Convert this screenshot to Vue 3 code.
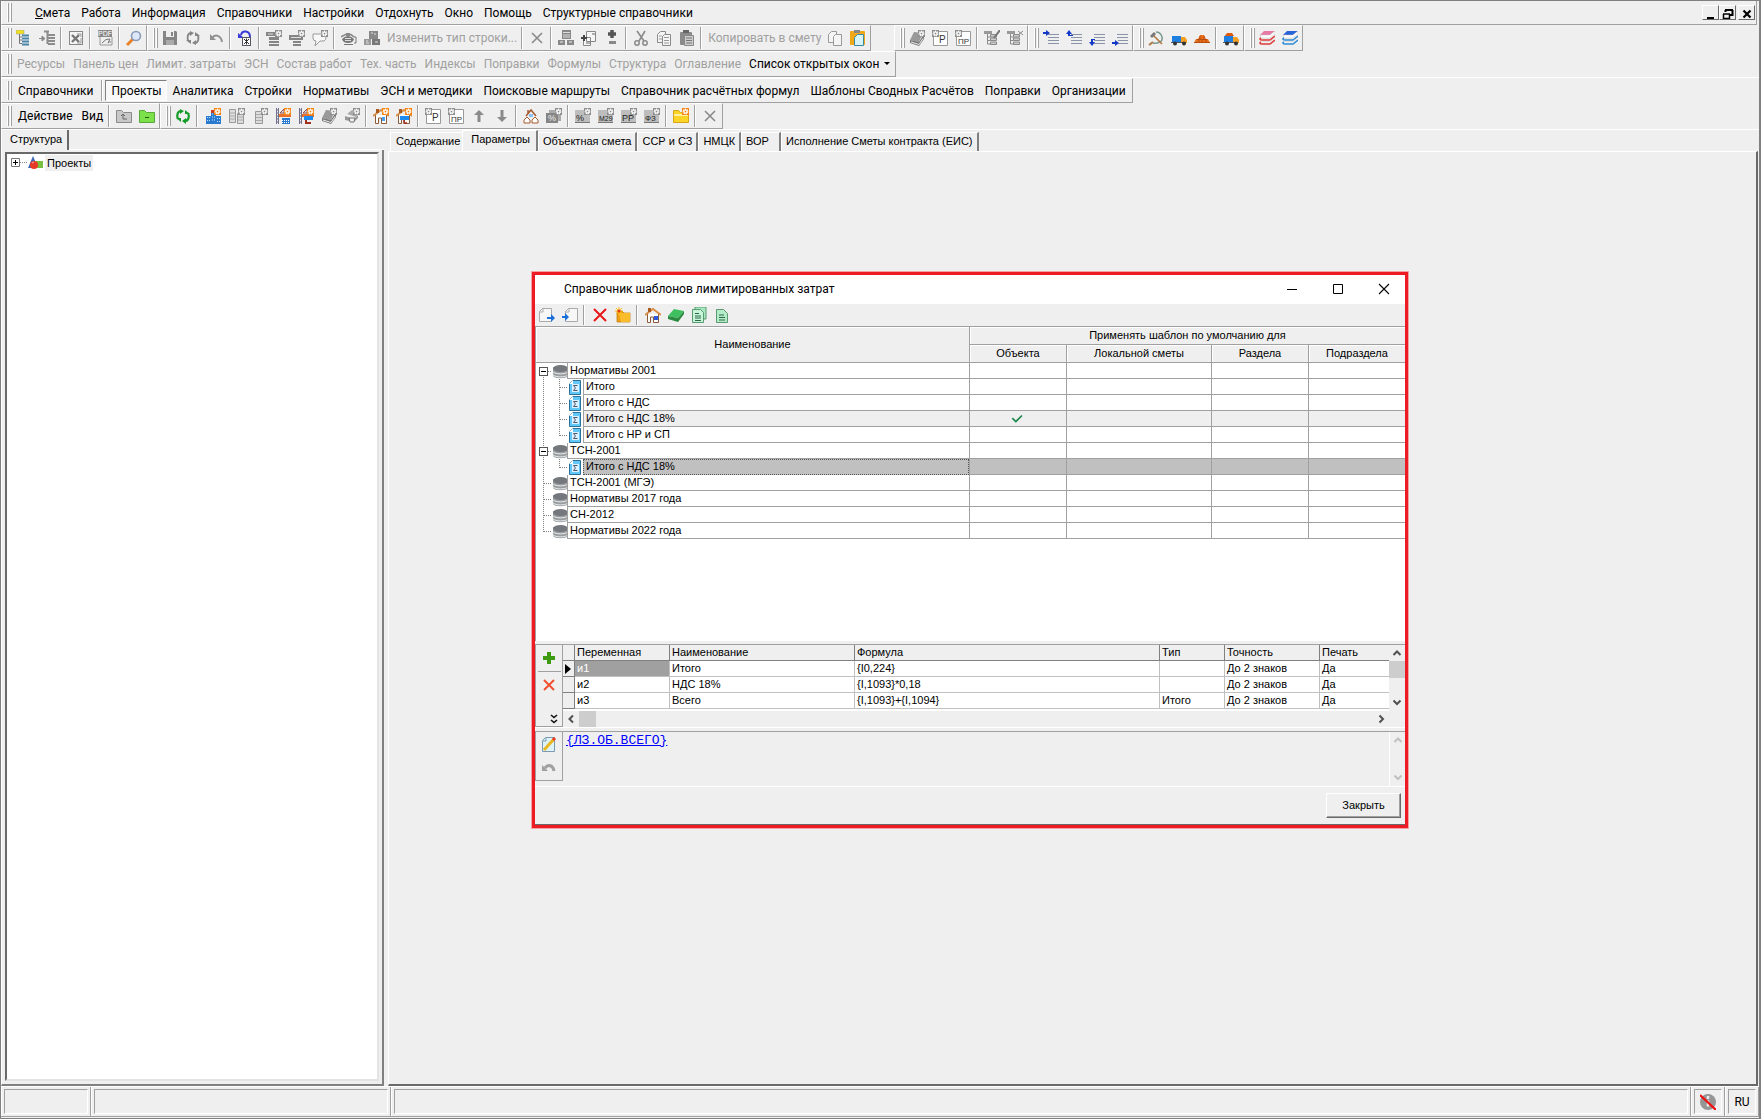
<script setup>
const gear = (x, y, c) =>
  `<rect x="${x}" y="${y}" width="7" height="7" fill="${c}"/><circle cx="${x + 3.5}" cy="${y + 3.5}" r="2" fill="none" stroke="#fff" stroke-width="1.8" stroke-dasharray="1.1 .5"/><circle cx="${x + 3.5}" cy="${y + 3.5}" r="1.4" fill="none" stroke="#fff"/>`
const G = '#8c8c8c'
const O = '#f58410'
const label = (s, x, y, size, c = '#333') =>
  `<text x="${x}" y="${y}" font-size="${size}" font-family="Liberation Sans, sans-serif" fill="${c}">${s}</text>`
const book = (c, d) =>
  `<path d="M1 10L5 2l9 1-4 9z" fill="${c}"/><path d="M1 10v3l9 3 5-7V4l-5 8z" fill="${d}"/><path d="M2 12l8 2.500 4-6" stroke="#eee" fill="none"/>`
const tree = (c, top) =>
  `<rect x="0" y="1" width="8" height="3" fill="${top}"/><path d="M3.500 4v10H7M3.500 7H7M3.500 10.500H7" stroke="${c}" fill="none"/><path d="M6.500 4.500h6v2.500h-6zM6.500 8h6v2.500h-6zM6.500 12h6v2.500h-6z" fill="#ccc" stroke="${c}"/>`
const page = (x) => `<path d="M${x}.500 4.500l3-3h9v13h-12z" fill="#f7f7f7" stroke="#aaa"/><path d="M${x} 5h4V1" fill="none" stroke="#aaa"/>`
const house = '<path d="M2.500 7v8.500h3V10h3v5.500h5V7" fill="#fff" stroke="#8a5a3a"/><path d="M0 8l8-6 8 6" fill="none" stroke="#d89048" stroke-width="2"/><rect x="3" y="1" width="3" height="4" fill="#a85a20"/>'
const plate = (s, size = 9) => `<rect x="0" y="2" width="15" height="13" fill="#bdbdbd"/><path d="M0 14.500h15" stroke="#777"/>${gear(9, 0, G)}${label(s, 1, 13, size, '#222')}`
const lines = '<path d="M5 4.500h11M5 7.500h11M5 10.500h11M5 13.500h11" stroke="#8b93a8"/>'
const truck = '<path d="M1 6h9v6H1z" fill="#1f7fe0"/><path d="M10 7h4l2 3v3h-6z" fill="#f5a020"/><path d="M0 12h15v1H0z" fill="#555"/><circle cx="4" cy="13.500" r="2" fill="#333"/><circle cx="13" cy="13.500" r="2" fill="#333"/>'
const crane = (extra) =>
  `<path d="M1.500 0v16M3.500 0v16M1 2h3M1 5h3M1 8h3M1 11h3M1 14h3" stroke="#70708c" fill="none"/><path d="M5 5l4-4v4z" fill="none" stroke="#8e4a4a"/><path d="M4 6h12v3H4z" fill="#e8702a"/>${extra}`
const sheets = (c) => `<path d="M1.500 4.500l3-3h5v11h-8z" fill="#f4f4f4" stroke="${c}"/><path d="M6.500 6.500l2-2h6v11h-8z" fill="#f4f4f4" stroke="${c}"/>`
const books = (a, b) =>
  `<path d="M5 1h11l-5 4H1z" fill="${a}"/><path d="M1 5h10l5-4v3l-5 4H2z" fill="#fff" stroke="#bbb" stroke-width=".5"/><path d="M2 8c-2 1-1 2 1 2h8l5-4M2 12c-2 1-1 2 1 2h8l5-4" fill="none" stroke="${b}" stroke-width="1.400"/><path d="M3 11.500h8l4-3" stroke="#ddd" fill="none"/>`

const icons = {
  treeY: `<rect x="0" y="0" width="8" height="4" fill="#f0e020" stroke="#999" stroke-width=".5"/><path d="M3.500 4v9.500H6M3.500 7H6M3.500 10H6" stroke="#777" fill="none"/><path d="M6 5.500h7M6 8.500h7M6 11.500h7M6 14.500h7" stroke="#4a86a8" stroke-width="2"/>`,
  treeG: `<path d="M0 8.500h5M3 6v5l3-2.500z" stroke="#888" fill="#888"/><path d="M5 1.500h5M8.500 2v12M9 5h7M9 8h7M9 11h7M9 14h7" stroke="#8c8c8c" stroke-width="2"/>`,
  excel: '<rect x="1.500" y="1.500" width="13" height="13" fill="#f4f4f4" stroke="#888"/><path d="M4 5l7 7M11 5l-7 7" stroke="#777" stroke-width="2.400"/><path d="M9 4h4v3M13 8v5H9" stroke="#999" fill="none"/>',
  pdf: `<rect x="1" y="0" width="14" height="7" fill="#888"/>${label('PDF', 1, 6, 7, '#fff')}<path d="M3 7v8h12V7" fill="#eee" stroke="#999"/><path d="M5 13q4-5 8-4l-2 4q2-2 3-1" stroke="#777" fill="none"/>`,
  search: '<path d="M7 9l-6 6" stroke="#e8822a" stroke-width="3"/><circle cx="10" cy="6" r="4.500" fill="#dce8fa" stroke="#8a9ab8" stroke-width="1.600"/>',
  save: '<path d="M1 1h13l1 1v13H1z" fill="#858585"/><path d="M4 1h8v6H4z" fill="#eee"/><path d="M9 2h2v4H9z" fill="#858585"/><path d="M4 10h8v5H4z" fill="#aaa"/>',
  refreshG: '<path d="M6 3C3 3 1 8 4 12M10 13c3 0 5-5 2-9" stroke="#858585" stroke-width="1.800" fill="none"/><path d="M5 1l4 2-4 3zM11 10l-4 3 4 2zM1 10h5v4zM15 6h-5V2z" fill="#858585"/>',
  refresh: '<path d="M6 3C3 3 1 7 3 11M10 13c3 0 5-4 3-8" stroke="#149c28" stroke-width="2.200" fill="none"/><path d="M5 1l4 2-4 3zM11 10l-4 3 4 3zM1 10h5v4zM15 6h-5V2z" fill="#149c28"/>',
  undo: '<path d="M4 8c3-4 9-3 10 4" stroke="#909090" stroke-width="2" fill="none"/><path d="M2 4v6h6z" fill="#909090"/>',
  undoB: '<path d="M4 5c1-5 9-5 9 2" stroke="#3a3ad8" stroke-width="2" fill="none"/><path d="M1 3v5h6z" fill="#3a3ad8"/><rect x="5.500" y="7.500" width="8" height="8" fill="#fff" stroke="#556"/><path d="M7 9l5 5M12 9l-5 5M9.500 8.500v6" stroke="#333"/>',
  g1: `<path d="M0 2h9v4H0z" fill="#858585"/><path d="M2 4h5" stroke="#ddd"/><path d="M3 7h10v3H3zM3 11h10v2H3zM3 14h10v2H3z" fill="#858585"/>${gear(9, 0, G)}`,
  g2: `<path d="M0 5h14v5H0z" fill="#858585"/><path d="M2 7.500h10" stroke="#ddd"/><path d="M4 11h8v2H4zM4 14h8v2H4z" fill="#858585"/>${gear(9, 0, G)}`,
  bubble: `<path d="M1 4h11q2 0 2 3t-2 4H8l-5 5 1-5q-3 0-3-3z" fill="#f8f8f8" stroke="#999"/>${gear(9, 0, G)}`,
  pot: '<path d="M1 9q6-6 12 0-1 4-6 4t-6-4z" fill="#777"/><path d="M0 7q8-6 13 0" stroke="#858585" stroke-width="1.500" fill="none"/><path d="M5 3h4v3H5z" fill="#888"/><path d="M13 7h2v6h-2M3 14.500h9" stroke="#777" fill="none"/><path d="M4 8.500h6M4 10.500h6" stroke="#ddd"/>',
  bricks: '<rect x="5" y="1" width="9" height="8" fill="#888"/><rect x="0" y="9" width="7" height="6" fill="#999"/><rect x="8" y="9" width="8" height="6" fill="#777"/><path d="M7 3h2M10 4h2M2 11h2M11 12h3M2 13h3" stroke="#ddd"/>',
  xG: '<path d="M3 3l10 10M13 3L3 13" stroke="#8a8a8a" stroke-width="1.600"/>',
  calc: '<rect x="4" y="0" width="9" height="9" fill="#888"/><path d="M5 2.500h7M5 5h7M5 7h7" stroke="#ddd"/><rect x="0" y="10" width="7" height="5" fill="#888"/><rect x="9" y="10" width="7" height="5" fill="#888"/><path d="M2 12h3M11 12h3" stroke="#eee"/>',
  docs: '<path d="M5.500 1.500h9v10h-9zM2.500 7.500h7v8h-7z" fill="#f6f6f6" stroke="#888"/><path d="M0 8h6M3 5v6" stroke="#444" stroke-width="2"/><path d="M5 13h4M11 4h3" stroke="#666"/>',
  plusminus: '<path d="M8 0v8M4 4h8" stroke="#555" stroke-width="3.500"/><path d="M5 12.500h7" stroke="#888" stroke-width="3"/>',
  cut: '<path d="M4 1l7 10M12 1L6 11" stroke="#8a8a8a" stroke-width="1.600"/><circle cx="4" cy="13" r="2.200" fill="none" stroke="#8a8a8a" stroke-width="1.500"/><circle cx="12" cy="13" r="2.200" fill="none" stroke="#8a8a8a" stroke-width="1.500"/>',
  copy: sheets('#8a8a8a') + '<path d="M8 7.500h5M8 10.500h5M8 13h5M3 6h3M3 9h3" stroke="#999"/>',
  paste: '<rect x="1" y="2" width="12" height="13" rx="1" fill="#8a8a8a"/><rect x="4" y="0" width="6" height="3" fill="#666"/><path d="M5.500 5.500h9v10h-9z" fill="#ccc" stroke="#888"/><path d="M7 8h6M7 10.500h6M7 13h6" stroke="#777"/>',
  copy2: sheets('#9a9a9a'),
  paste2: '<rect x="0" y="1" width="15" height="14" rx="1" fill="#f0a818"/><rect x="4" y="0" width="6" height="3" fill="#888"/><path d="M4.500 7.500l3-3h6v11h-9z" fill="#d6f4f8" stroke="#3a8aa0"/>',
  bookG: book('#999', '#777') + gear(9, 0, G),
  bookG2: '<path d="M3 6l5-4 7 3-3 4z" fill="#aaa"/><path d="M1 8l3-4M1 8v4l9 2 4-4V7l-4 4z" fill="#999"/><path d="M5 10h6l-1 4H6z" fill="#eee" stroke="#777"/>' + gear(9, 0, G),
  pP: `<path d="M1.500 1.500h14v14h-14z" fill="#fff" stroke="#999"/>${label('P', 7, 13, 10)}${gear(0, 0, G)}`,
  pPR: `<path d="M1.500 1.500h14v14h-14z" fill="#fff" stroke="#999"/>${label('ПР', 3, 14, 8)}${gear(0, 0, G)}`,
  treeE: tree('#8a8a8a', '#999') + '<path d="M16 0L10 8" stroke="#777" stroke-width="2"/>',
  treeX: tree('#8a8a8a', '#999') + '<path d="M11 1l5 4M16 1l-5 4" stroke="#888"/>',
  ind1: lines + '<path d="M0 2h3V0l4 3-4 3V4H0z" fill="#1238c8"/>',
  ind2: lines + '<path d="M2 6V4H0l3-4 3 4H4v1h3v1z" fill="#1238c8"/>',
  ind3: lines + '<rect x="0" y="9" width="5" height="7" fill="#efefef"/><path d="M6 9H2v3H0l3 4 3-4H4v-2h2z" fill="#1238c8"/>',
  ind4: lines + '<rect x="0" y="9" width="6" height="7" fill="#efefef"/><path d="M0 12h3v-2l4 3-4 3v-2H0z" fill="#1238c8"/>',
  sickle: '<path d="M8 2c6 0 8 8 4 10s-7 1-7 1" stroke="#7a9a90" stroke-width="1.500" fill="none"/><path d="M5 5l9 9" stroke="#b07840" stroke-width="1.600"/><path d="M2 6l4-4 2 2-4 4z" fill="#777"/><path d="M5 12l-4 3" stroke="#b07840" stroke-width="2"/>',
  truck,
  pile: '<path d="M0 13l2-4h2l2-4h4l2 4h2l2 4z" fill="#e8701c"/><path d="M3 9.500h10M0 12.500h16M6 6v3M10 6v3M5 10v3M8 10v3M12 10v3" stroke="#b84c0c"/>',
  truckL: '<path d="M1 7l3-4h5l2 3z" fill="#e05a10"/>' + truck,
  booksR: books('#e87aa8', '#e03838'),
  booksB: books('#2a62d8', '#2a8ad8'),
  up: '<path d="M.500 14.500v-12h5l2 2h8v10z" fill="#c8c8c8" stroke="#8a8a8a"/><path d="M5 8l2-2 2 2M7 6v5h4" stroke="#666" fill="none"/>',
  minusF: '<path d="M.500 14.500v-12h5l2 2h8v10z" fill="#7be04a" stroke="#58a838"/><path d="M6 9.500h4" stroke="#225a10"/>',
  city: '<path d="M0 8h5v8H0zM5 4h5v12H5zM10 8h5v8h-5z" fill="#2a7ad0"/><path d="M1 9.500h3M1 12.500h3M6 6h3M6 9h3M6 12h3M11 10.500h3M11 13.500h3" stroke="#bfe0ff" stroke-dasharray="1 1"/><path d="M5 2h3v3H5z" fill="#d03a20"/>' + gear(8, 0, O),
  cols: '<path d="M.500 1.500h6v13h-6zM8.500 5.500h6v10h-6z" fill="#ddd" stroke="#999"/><path d="M1 5h5M1 8h5M1 11h5M9 9h5M9 12h5" stroke="#aaa"/>' + gear(9, 0, G),
  col: '<path d="M3.500 3.500h7v12h-7z" fill="#ddd" stroke="#999"/><path d="M4 6.500h6M4 9.500h6M4 12.500h6" stroke="#aaa"/>' + gear(9, 0, G),
  crane: crane('<path d="M7 10h8v6H7z" fill="#2a7ad0"/><path d="M7 12.500h8M7 14.500h8" stroke="#fff" stroke-dasharray="1 1"/>') + gear(9, 0, O),
  crane2: crane('<path d="M6 8h9v4H6z" fill="#1c8af0"/><path d="M8 12v3h5" stroke="#a03020" stroke-width="2" fill="none"/>') + gear(9, 0, O),
  house1: house + '<rect x="9" y="9" width="3" height="4" fill="#4aa0f0"/>' + gear(9, 0, O),
  house2: house + '<rect x="4" y="8" width="9" height="4" fill="#1c8af0"/><path d="M8 12v3h3" stroke="#a03020" stroke-width="1.500" fill="none"/>' + gear(9, 0, O),
  arrowU: '<path d="M8 14V6" stroke="#8a8a8a" stroke-width="3"/><path d="M3 7l5-5 5 5z" fill="#8a8a8a"/>',
  arrowD: '<path d="M8 2v8" stroke="#8a8a8a" stroke-width="3"/><path d="M3 9l5 5 5-5z" fill="#8a8a8a"/>',
  houses: '<path d="M3 8l5-6 5 6M5 2v3" fill="none" stroke="#a85a30" stroke-width="1.500"/><path d="M1 15v-3l3-3 3 3v3zM9 15v-3l3-3 3 3v3z" fill="#fff" stroke="#a85a30"/><path d="M6 6h4v3H6z" fill="#8ac0f0"/>',
  pcts: `<path d="M3 2h12v11H3z" fill="#aaa"/><path d="M0 5h12v10H0z" fill="#858585"/>${label('%', 2, 13, 9, '#eee')}${gear(9, 0, G)}`,
  plPct: plate('%'),
  plM: plate('М29', 7),
  plPP: plate('РР'),
  plF: plate('ФЗ', 8),
  folderY: '<path d="M.500 14.500v-12h5l2 2h8v10z" fill="#fcd428" stroke="#d8a418"/><path d="M1 7h14" stroke="#fff0a0" stroke-width="2"/>' + gear(9, 0, O),
  dOut: page(0) + '<path d="M8 10h4V7l4 4-4 4v-3H8z" fill="#1a70d8"/>',
  dIn: page(3) + '<path d="M0 9h3V6l4 4-4 4v-3H0z" fill="#1a70d8"/>',
  xR: '<path d="M2 2l12 12M14 2L2 14" stroke="#e81818" stroke-width="2"/>',
  folderN: '<path d="M2 4h5l2 2h6v9H2z" fill="#f0a010" stroke="#b87810" stroke-width=".7"/><path d="M4 6h11v9H6z" fill="#fbbc2c"/><path d="M4 0v8M0 4h8M1 1l6 6M7 1L1 7" stroke="#fac020"/><circle cx="4" cy="4" r="1.500" fill="#e83a1a"/>',
  home: house + '<rect x="9" y="9" width="4" height="4" fill="#2a5ae0"/>',
  bookGr: '<path d="M6 2l10 2-6 7-10-2z" fill="#3fc060"/><path d="M0 9v3l10 3 6-8V4l-6 7z" fill="#2a8a40"/>',
  gdoc2: '<path d="M4 0h11v12H4z" fill="#a8e8c0" stroke="#5a9a70"/><path d="M1.500 2.500h8l3 3v10h-11z" fill="#c8f4d8" stroke="#5a9a70"/><path d="M4 6.500h4M4 9h6M4 11h6M4 13.500h6" stroke="#2a6a4a"/>',
  gdoc: '<path d="M2.500 2.500h7l4 4v9h-11z" fill="#b4ecc8" stroke="#5a9a70"/><path d="M5 8h5M5 10.500h6M5 13h6" stroke="#2a6a4a"/>',
  shapes: '<path d="M1 13L6 1l5 12z" fill="#3a6ab8"/><rect x="8" y="6" width="8" height="7" fill="#7ac040"/><circle cx="7" cy="10" r="4" fill="#e83a28"/><path d="M5 8l2-1" stroke="#faa"/>',
  disc: '<path d="M1 4v9c2 3 13 3 15 0V4z" fill="#9a9da0"/><path d="M1 9c3 2.500 12 2.500 15 0M1 12c3 2.500 12 2.500 15 0" stroke="#e8eef0" fill="none"/><ellipse cx="8.500" cy="5.500" rx="7.500" ry="3.500" fill="#74777c"/>',
  sigma: '<path d="M1.500 4.500l3-3h8v14h-11z" fill="#62c8f8" stroke="#2a6e9a"/><path d="M1 5h4V1z" fill="#fff"/><rect x="4" y="5" width="7" height="8" fill="#d8f2ff"/><path d="M9.500 6.500h-4l2 2.500-2 2.500h4" stroke="#556" fill="none"/>',
  plus: '<path d="M8 2v12M2 8h12" stroke="#3e9a10" stroke-width="4"/>',
  xS: '<path d="M3 3l10 10M13 3L3 13" stroke="#f05030" stroke-width="2"/>',
  more: '<path d="M5 5l3 2.500L11 5M5 10l3 2.500L11 10" stroke="#111" stroke-width="1.600" fill="none"/>',
  edit: '<path d="M1.500 4.500l3-3h9v14h-12z" fill="#dff2f8" stroke="#7a9ab0"/><path d="M2 5h3V2" stroke="#7a9ab0" fill="none"/><path d="M3 14L13 3" stroke="#e8b820" stroke-width="3"/><path d="M12 4l2-2" stroke="#e83a28" stroke-width="3"/>',
  undo2: '<path d="M4 8c3-4 8-3 9 3" stroke="#a0a0a0" stroke-width="3" fill="none"/><path d="M1 5v6h6z" fill="#a0a0a0"/>',
  info: '<circle cx="8" cy="8" r="8" fill="#969696"/><path d="M8 2v3M8 6.500v6" stroke="#eee" stroke-width="2.500"/><path d="M0 1l16 15" stroke="#f01010" stroke-width="2.200"/>',
  check: '<path d="M1.500 7l4 4 7-7" stroke="#1e8a4c" stroke-width="2" fill="none"/>',
  chU: '<path d="M4.500 10L8 6.500 11.500 10" stroke="currentColor" stroke-width="2" fill="none"/>',
  chD: '<path d="M4.500 6.500L8 10l3.500-3.500" stroke="currentColor" stroke-width="2" fill="none"/>',
  chL: '<path d="M10 4.500L6.500 8l3.500 3.500" stroke="currentColor" stroke-width="2" fill="none"/>',
  chR: '<path d="M6.500 4.500L10 8l-3.500 3.500" stroke="currentColor" stroke-width="2" fill="none"/>',
  wMin: '<path d="M3 8.500h10" stroke="#000"/>',
  wMax: '<path d="M3.500 3.500h9v9h-9z" stroke="#000" fill="none"/>',
  wClose: '<path d="M3 3l10 10M13 3L3 13" stroke="#000" stroke-width="1.100"/>',
  mMin: '<path d="M4 12h7" stroke="#000" stroke-width="2"/>',
  mRest: '<path d="M5.500 6V4M5 4h8M12.500 4v5H10" stroke="#000" stroke-width="2" fill="none"/><path d="M3 8h7M3.500 8v4.500h6V8" stroke="#000" stroke-width="1.500" fill="none"/>',
  mClose: '<path d="M4.500 4.500l7 7M11.500 4.500l-7 7" stroke="#000" stroke-width="2.200"/>',
}

const i = (...names) => names.map((n) => (n === '|' ? { sep: true } : { icon: n }))
const t = (...texts) => texts.map((text) => ({ text }))
const off = (...texts) => texts.map((text) => ({ text, disabled: true }))

const bars = [
  {
    name: 'tools',
    bands: [
      i('treeY', 'treeG', '|', 'excel', '|', 'pdf', '|', 'search'),
      [
        ...i('save', 'refreshG', 'undo', '|', 'undoB', '|', 'g1', 'g2', 'bubble', '|', 'pot', 'bricks'),
        ...off('Изменить тип строки...'),
        ...i('|', 'xG', '|', 'calc', 'docs', 'plusminus', '|', 'cut', 'copy', 'paste', '|'),
        ...off('Копировать в смету'),
        ...i('copy2', 'paste2'),
      ],
      i('bookG', 'pP', 'pPR', '|', 'treeE', 'treeX'),
      i('ind1', 'ind2', 'ind3', 'ind4'),
      i('sickle', 'truck', 'pile', '|', 'truckL'),
      i('booksR', 'booksB'),
    ],
  },
  {
    name: 'panels',
    bands: [
      [
        ...off('Ресурсы', 'Панель цен', 'Лимит. затраты', 'ЭСН', 'Состав работ', 'Тех. часть', 'Индексы', 'Поправки', 'Формулы', 'Структура', 'Оглавление'),
        { text: 'Список открытых окон', drop: true },
      ],
    ],
  },
  {
    name: 'sections',
    bands: [
      [
        ...t('Справочники'),
        { sep: true },
        { text: 'Проекты', pressed: true },
        ...t('Аналитика', 'Стройки', 'Нормативы', 'ЭСН и методики', 'Поисковые маршруты', 'Справочник расчётных формул', 'Шаблоны Сводных Расчётов', 'Поправки', 'Организации'),
      ],
    ],
  },
  {
    name: 'actions',
    bands: [
      [...t('Действие', 'Вид'), ...i('|', 'up', 'minusF')],
      [
        ...i('refresh'),
        { sep: true, wide: true },
        ...i('city', 'cols', 'col', 'crane', 'crane2', 'bookG', 'bookG2', '|', 'house1', 'house2', '|'),
        ...i('pP', 'pPR', 'arrowU', 'arrowD', '|', 'houses', 'pcts', '|', 'plPct', 'plM', 'plPP', 'plF', '|', 'folderY', '|', 'xG'),
      ],
    ],
  },
]

const menu = ['Работа', 'Информация', 'Справочники', 'Настройки', 'Отдохнуть', 'Окно', 'Помощь', 'Структурные справочники']
const tabs = ['Содержание', 'Параметры', 'Объектная смета', 'ССР и СЗ', 'НМЦК', 'ВОР', 'Исполнение Сметы контракта (ЕИС)']

const vline = (x, a, b) => `<path d="M${x}.500 ${a}V${b}" stroke="#808080" stroke-dasharray="1 1"/>`
const hline = (a, b) => `<path d="M${a} 8.500H${b}" stroke="#808080" stroke-dasharray="1 1"/>`
const box = '<rect x="3.500" y="4.500" width="8" height="8" fill="#fff" stroke="#555"/><path d="M5 8.500h5" stroke="#000"/>'
const branch = vline(7, 0, 16) + hline(8, 16)
const twig = vline(7, 0, 16) + hline(24, 32)
const rows = [
  { text: 'Нормативы 2001', toggle: true, lines: vline(7, 12, 16) + hline(12, 16) + box },
  { text: 'Итого', child: true, lines: twig + vline(23, 0, 16) },
  { text: 'Итого с НДС', child: true, lines: twig + vline(23, 0, 16) },
  { text: 'Итого с НДС 18%', child: true, checked: true, lines: twig + vline(23, 0, 16) },
  { text: 'Итого с НР и СП', child: true, lines: twig + vline(23, 0, 9) },
  { text: 'ТСН-2001', toggle: true, lines: vline(7, 0, 16) + hline(12, 16) + box },
  { text: 'Итого с НДС 18%', child: true, selected: true, lines: twig + vline(23, 0, 9) },
  { text: 'ТСН-2001 (МГЭ)', lines: branch },
  { text: 'Нормативы 2017 года', lines: branch },
  { text: 'СН-2012', lines: branch },
  { text: 'Нормативы 2022 года', lines: vline(7, 0, 9) + hline(8, 16) },
]
const targets = ['Объекта', 'Локальной сметы', 'Раздела', 'Подраздела']

const varHead = ['Переменная', 'Наименование', 'Формула', 'Тип', 'Точность', 'Печать']
const vars = [
  ['и1', 'Итого', '{I0,224}', '', 'До 2 знаков', 'Да'],
  ['и2', 'НДС 18%', '{I,1093}*0,18', '', 'До 2 знаков', 'Да'],
  ['и3', 'Всего', '{I,1093}+{I,1094}', 'Итого', 'До 2 знаков', 'Да'],
]
</script>

<template>
  <div class="app">
    <header>
      <nav class="menubar">
        <span class="grip"></span>
        <span class="menuicon"></span>
        <button class="item"><u>С</u>мета</button>
        <button v-for="m in menu" :key="m" class="item">{{ m }}</button>
        <span class="mdi">
          <button class="mdibtn" aria-label="Свернуть"><svg viewBox="0 0 16 16" v-html="icons.mMin" /></button>
          <button class="mdibtn" aria-label="Восстановить"><svg viewBox="0 0 16 16" v-html="icons.mRest" /></button>
          <button class="mdibtn last" aria-label="Закрыть окно"><svg viewBox="0 0 16 16" v-html="icons.mClose" /></button>
        </span>
      </nav>
      <div v-for="bar in bars" :key="bar.name" class="bar" :class="bar.name">
        <div v-for="(band, b) in bar.bands" :key="b" class="band">
          <span class="grip"></span>
          <template v-for="(it, k) in band" :key="k">
            <span v-if="it.sep" class="sep" :class="{ wide: it.wide }"></span>
            <button v-else-if="it.icon" class="tool" :aria-label="it.icon"><svg viewBox="0 0 16 16" v-html="icons[it.icon]" /></button>
            <button v-else class="item" :class="{ off: it.disabled, pressed: it.pressed }" :disabled="it.disabled">
              {{ it.text }}<span v-if="it.drop" class="drop"></span>
            </button>
          </template>
        </div>
      </div>
    </header>

    <main class="work">
      <aside class="left">
        <div class="lefttabs"><button class="ltab">Структура</button><span class="tabline"></span></div>
        <div class="leftpane">
          <div class="treebox">
            <div class="node">
              <svg viewBox="0 0 16 16"><path d="M.5 3.500h8v8h-8z" fill="#fff" stroke="#777" /><path d="M2 7.500h5M4.500 5v5" stroke="#000" /><path d="M9 7.500h7" stroke="#888" stroke-dasharray="1 1" /></svg>
              <svg viewBox="0 0 16 16" v-html="icons.shapes" />
              <span class="nodetext">Проекты</span>
            </div>
          </div>
        </div>
      </aside>
      <section class="right">
        <div class="tabs">
          <button v-for="(tab, k) in tabs" :key="tab" class="tab" :class="{ active: k === 1, first: k === 0 }">{{ tab }}</button>
        </div>
        <div class="rightpane"></div>
      </section>
    </main>

    <footer class="status">
      <div class="cell c1"><span></span></div>
      <div class="cell c2"><span></span></div>
      <div class="cell c3"><span></span></div>
      <div class="cell c4"><span><svg viewBox="0 0 16 16" v-html="icons.info" /></span></div>
      <div class="cell c4"><span>RU</span></div>
    </footer>

    <div class="dialog" role="dialog" aria-labelledby="dlg-title">
      <div class="title">
        <span id="dlg-title">Справочник шаблонов лимитированных затрат</span>
        <span class="winbtns">
          <button aria-label="Свернуть"><svg viewBox="0 0 16 16" v-html="icons.wMin" /></button>
          <button aria-label="Развернуть"><svg viewBox="0 0 16 16" v-html="icons.wMax" /></button>
          <button aria-label="Закрыть справочник"><svg viewBox="0 0 16 16" v-html="icons.wClose" /></button>
        </span>
      </div>
      <div class="dtools">
        <template v-for="(it, k) in i('dOut', 'dIn', '|', 'xR', 'folderN', '|', 'home', 'bookGr', 'gdoc2', 'gdoc')" :key="k">
          <span v-if="it.sep" class="sep"></span>
          <button v-else class="tool" :aria-label="it.icon"><svg viewBox="0 0 16 16" v-html="icons[it.icon]" /></button>
        </template>
      </div>
      <div class="treewrap">
        <table class="treegrid">
          <colgroup><col /><col class="w97" /><col class="w145" /><col class="w97" /><col class="w96" /></colgroup>
          <thead>
            <tr>
              <th rowspan="2">Наименование</th>
              <th colspan="4">Применять шаблон по умолчанию для</th>
            </tr>
            <tr>
              <th v-for="h in targets" :key="h" class="sub">{{ h }}</th>
            </tr>
          </thead>
          <tbody>
            <tr v-for="(r, k) in rows" :key="k" :class="{ checked: r.checked, selected: r.selected }">
              <td class="namecell">
                <div class="name">
                  <component :is="r.toggle ? 'button' : 'span'" class="gutter" :aria-label="r.toggle ? 'Свернуть ветвь' : null">
                    <svg :class="r.child ? 'g32' : 'g16'" v-html="r.lines" />
                    <svg class="nodeicon" viewBox="0 0 16 16" v-html="r.child ? icons.sigma : icons.disc" />
                  </component>
                  <span class="label">{{ r.text }}</span>
                </div>
              </td>
              <td class="mark"><svg v-if="r.checked" viewBox="0 0 16 16" v-html="icons.check" /></td>
              <td></td>
              <td></td>
              <td></td>
            </tr>
          </tbody>
        </table>
      </div>
      <div class="varpane">
        <div class="side">
          <button aria-label="Добавить"><svg viewBox="0 0 16 16" v-html="icons.plus" /></button>
          <hr />
          <button aria-label="Удалить"><svg viewBox="0 0 16 16" v-html="icons.xS" /></button>
          <button class="more" aria-label="Ещё"><svg viewBox="0 0 16 16" v-html="icons.more" /></button>
        </div>
        <div class="varmain">
          <div class="vartop">
            <table class="vargrid">
              <colgroup><col class="w12" /><col class="w95" /><col class="w185" /><col /><col class="w65" /><col class="w95" /><col class="w69" /></colgroup>
              <thead>
                <tr><th></th><th v-for="h in varHead" :key="h">{{ h }}</th></tr>
              </thead>
              <tbody>
                <tr v-for="(v, k) in vars" :key="k">
                  <th><span v-if="k === 0" class="pointer"></span></th>
                  <td v-for="(c, n) in v" :key="n" :class="{ cur: k === 0 && n === 0 }">{{ c }}</td>
                </tr>
              </tbody>
            </table>
            <div class="vscroll">
              <svg viewBox="0 0 16 16" v-html="icons.chU" /><span class="vthumb"></span><svg class="end" viewBox="0 0 16 16" v-html="icons.chD" />
            </div>
          </div>
          <div class="hscroll">
            <svg viewBox="0 0 16 16" v-html="icons.chL" /><span class="hthumb"></span><svg class="endh" viewBox="0 0 16 16" v-html="icons.chR" />
          </div>
        </div>
      </div>
      <div class="formula">
        <div class="side small">
          <button aria-label="Изменить"><svg viewBox="0 0 16 16" v-html="icons.edit" /></button>
          <button aria-label="Отменить"><svg viewBox="0 0 16 16" v-html="icons.undo2" /></button>
        </div>
        <div class="ftext"><a href="#">{ЛЗ.ОБ.ВСЕГО}</a></div>
        <div class="vscroll dim">
          <svg viewBox="0 0 16 16" v-html="icons.chU" /><svg class="end" viewBox="0 0 16 16" v-html="icons.chD" />
        </div>
      </div>
      <div class="dfoot"><button class="close">Закрыть</button></div>
    </div>
  </div>
</template>

<style>
body { margin: 0; background: #efefef; }
</style>

<style scoped>
.app {
  box-sizing: border-box;
  min-height: 100vh;
  display: flex;
  flex-direction: column;
  position: relative;
  background: #efefef;
  border: 1px solid #808080;
  border-right: 2px solid #808080;
  font: 12px/16px Roboto, "Open Sans", sans-serif;
  color: #000;
}
.app * { box-sizing: border-box; }
button { border: 0; background: none; padding: 0; margin: 0; font: inherit; color: inherit; white-space: nowrap; }
svg { width: 16px; height: 16px; display: block; flex: none; }

.menubar { display: flex; align-items: center; height: 24px; margin-right: 2px; border-bottom: 1px solid #a0a0a0; border-right: 1px solid #a0a0a0; border-left: 1px solid #fff; }
.grip { flex: none; align-self: stretch; width: 5px; margin: 2px 0 2px 5px; background: linear-gradient(90deg, #fff 1px, #a0a0a0 1px 2px, #efefef 2px 3px, #fff 3px 4px, #a0a0a0 4px); }
.menuicon { width: 17px; }
.item { padding: 0 5px 0 6px; line-height: 20px; }
.panels .item { padding: 0 4px 0 5px; }
.panels .item.off { padding: 0 3px 0 5px; }
.tools .item { padding: 0 2px 0 4px; }
.actions .item { padding: 0 3px 0 6px; }
.item.off { color: #a0a0a0; }
.mdi { margin-left: auto; display: flex; margin-right: 1px; }
.mdibtn { width: 17px; height: 15px; border: 1px solid; border-color: #fff #696969 #696969 #fff; display: grid; place-items: center; overflow: hidden; }
.mdibtn.last { margin-left: 2px; }
.bar { display: flex; height: 26px; }
.sections { border-top: 1px solid #fff; }
.band { display: flex; align-items: center; border: 1px solid; border-color: #fff #a0a0a0 #a0a0a0 #fff; padding-right: 1px; }
.tools .band:nth-child(3) { margin-left: 23px; }
.tool { width: 23px; height: 22px; display: grid; place-items: center; }
.sep { flex: none; width: 6px; align-self: stretch; background: linear-gradient(90deg, transparent 2px, #a0a0a0 2px 3px, #fff 3px 4px, transparent 4px); margin: 1px 0; }
.sep.wide { width: 8px; }
.dtools .sep { width: 7px; }
.item.pressed { border: 1px solid; border-color: #808080 #fff #fff #808080; background: #f8f8f8; padding: 1px 4px 0 6px; height: 21px; line-height: 19px; }
.drop { display: inline-block; border: 3px solid transparent; border-top-color: #000; border-bottom: 0; margin: 0 0 3px 5px; }

.work { flex: 1; display: flex; border-top: 1px solid #fff; font: 11px/14px "Liberation Sans", Arial, sans-serif; }
.left { width: 383px; display: flex; flex-direction: column; }
.lefttabs { display: flex; height: 20px; }
.ltab { width: 68px; text-align: left; padding: 0 0 3px 8px; border-left: 1px solid #fff; border-right: 2px solid #696969; }
.tabline { flex: 1; border-bottom: 1px solid #fff; }
.leftpane { flex: 1; display: flex; padding: 2px 3px 3px 3px; border: 1px solid; border-width: 0 2px 2px 1px; border-color: #fff #808080 #808080 #fff; }
.treebox { flex: 1; background: #fff; border: 2px solid; border-color: #696969 #e3e3e3 #e3e3e3 #696969; padding: 1px 0 0 4px; }
.node { display: flex; align-items: center; height: 16px; }
.nodetext { background: #efefef; padding: 1px 2px; margin-left: 2px; }
.right { flex: 1; display: flex; flex-direction: column; margin: 0 1px 0 4px; }
.tabs { display: flex; align-items: flex-end; height: 21px; }
.tab { height: 19px; padding: 0 4px 2px; border-top: 1px solid #fff; border-left: 1px solid #fff; border-right: 2px solid #808080; line-height: 16px; min-width: 40px; text-align: left; }
.tab.first { border-right: 0; padding: 0 2px 2px 5px; margin-left: 2px; }
.tab.active { height: 21px; padding: 0 6px 4px 8px; }
.rightpane { flex: 1; border: 1px solid; border-width: 1px 2px 2px 1px; border-color: #fff #696969 #696969 #fff; }

.status { display: flex; height: 31px; margin-bottom: 1px; border-top: 1px solid #fff; border-bottom: 1px solid #a0a0a0; }
.cell { padding: 2px; border-right: 1px solid #a0a0a0; border-left: 1px solid #fff; }
.cell span { display: grid; place-items: center; height: 100%; border: 1px solid; border-color: #a0a0a0 #fff #fff #a0a0a0; }
.c1 { width: 90px; }
.c2 { width: 300px; }
.c3 { flex: 1; }
.c4 { width: 34px; }

.dialog { position: absolute; left: 531px; top: 271px; width: 876px; display: flex; flex-direction: column; border: 3px solid #ed1c24; box-shadow: 0 0 0 1px #f3a3a6; background: #efefef; font: 11px/14px "Liberation Sans", Arial, sans-serif; }
.title { height: 29px; background: #fff; display: flex; align-items: center; padding: 0 0 1px 29px; font: 12px/16px Roboto, "Open Sans", sans-serif; }
.winbtns { margin-left: auto; display: flex; }
.winbtns button { width: 46px; height: 28px; padding-left: 4px; display: grid; place-items: center; }
.dtools { display: flex; height: 22px; align-items: center; }
.treewrap { background: #fff; min-height: 315px; border-top: 1px solid #a0a0a0; border-left: 1px solid #a0a0a0; }
table { border-collapse: separate; border-spacing: 0; table-layout: fixed; width: 100%; }
.w97 { width: 97px; }
.w96 { width: 96px; }
.w145 { width: 145px; }
.w12 { width: 12px; }
.w95 { width: 95px; }
.w185 { width: 185px; }
.w65 { width: 65px; }
.w69 { width: 69px; }
th { font-weight: normal; }
.treegrid th { background: #efefef; height: 18px; padding: 0 0 1px; border-right: 1px solid #a0a0a0; border-bottom: 1px solid #a0a0a0; box-shadow: inset 1px 1px #fff; }
.treegrid td { height: 16px; padding: 0; border-right: 1px solid #a0a0a0; border-bottom: 1px solid #a0a0a0; }
.treegrid .namecell { border-bottom: 0; }
.treegrid tbody td:last-child, .treegrid .sub:last-child, .treegrid th[colspan] { border-right: 0; }
.name { display: flex; height: 16px; }
.gutter { display: flex; }
.g16 { width: 16px; }
.g32 { width: 32px; }
.nodeicon { margin-right: -1px; }
.label { flex: 1; border-left: 1px solid #a0a0a0; border-bottom: 1px solid #a0a0a0; padding-left: 2px; line-height: 15px; }
.checked td:not(.namecell), .checked .label { background: #efefef; }
.selected td:not(.namecell), .selected .label { background: #c0c0c0; }
.selected .label { border: 1px dotted #555; line-height: 13px; }
.mark svg { margin: 0 auto; height: 14px; }

.varpane { display: flex; margin-top: 3px; border-top: 1px solid #a0a0a0; border-bottom: 1px solid #fff; }
.side { width: 28px; border: 1px solid #a0a0a0; border-top: 0; display: flex; flex-direction: column; }
.side button { width: 26px; height: 26px; display: grid; place-items: center; }
.side hr { width: 23px; margin: 0 auto; border: 0; border-top: 1px solid #a0a0a0; }
.side .more { margin: auto 0 0 5px; height: 16px; }
.varmain { flex: 1; min-width: 0; }
.vartop { display: flex; background: #fff; padding-bottom: 2px; }
.vargrid { flex: 1; width: auto; }
.vargrid th, .vargrid td { height: 16px; padding: 0 0 0 2px; line-height: 15px; text-align: left; border-right: 1px solid #c0c0c0; border-bottom: 1px solid #c0c0c0; white-space: nowrap; }
.vargrid th { background: #efefef; border-color: #808080; }
.vargrid tr > :last-child { border-right: 0; }
.vargrid .cur { background: #a0a0a0; color: #fff; }
.pointer { display: block; width: 0; border: 5px solid transparent; border-left: 6px solid #000; border-right: 0; }
.vscroll { width: 16px; margin-bottom: -2px; padding-bottom: 1px; background: #efefef; display: flex; flex-direction: column; color: #505050; }
.vthumb { height: 17px; background: #cdcdcd; }
.end { margin-top: auto; }
.hscroll { display: flex; height: 16px; padding-right: 16px; color: #505050; }
.hthumb { width: 17px; background: #cdcdcd; }
.endh { margin-left: auto; }
.formula { display: flex; height: 56px; margin-top: 3px; border-top: 1px solid #a0a0a0; border-bottom: 1px solid #fff; }
.side.small { height: 49px; }
.side.small button { height: 24px; }
.ftext { flex: 1; padding: 1px 3px; font: 13px/16px "Liberation Mono", "Courier New", monospace; }
.ftext a { color: #00f; }
.formula .vscroll { margin: 0; border-left: 1px solid #fff; }
.formula .dim { color: #c0c0c0; }
.dfoot { height: 38px; border-bottom: 1px solid #696969; display: flex; justify-content: flex-end; align-items: center; padding: 0 4px 1px; }
.close { width: 75px; height: 25px; border: 1px solid; border-color: #fff #696969 #696969 #fff; box-shadow: inset -1px -1px #a0a0a0; }
</style>
